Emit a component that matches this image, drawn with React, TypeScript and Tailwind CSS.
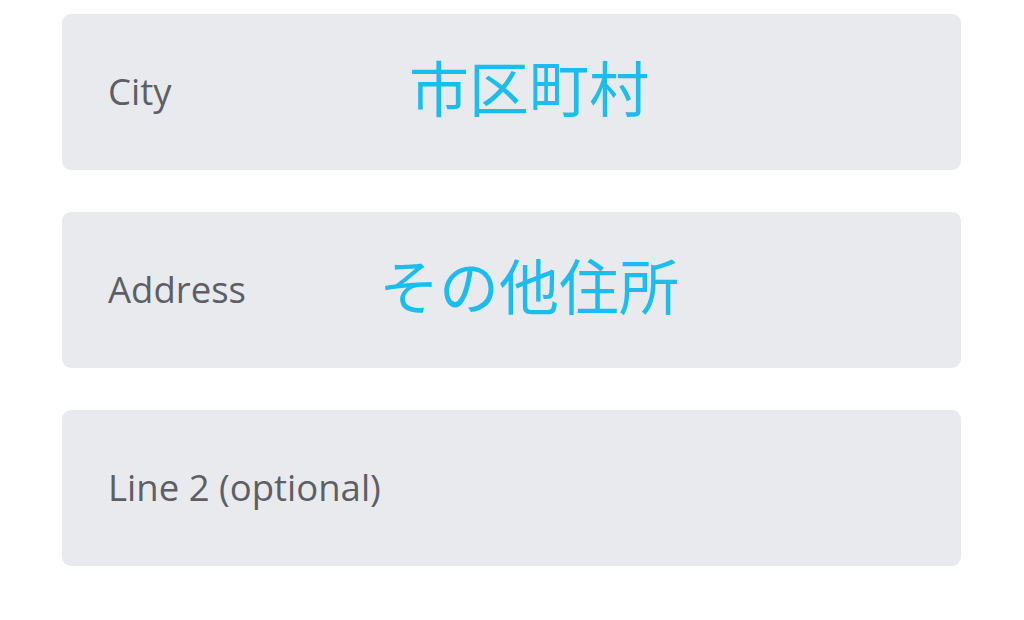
import React from "react";

const rows = [
  { label: "City", value: "市区町村" },
  { label: "Address", value: "その他住所" },
  { label: "Line 2 (optional)", value: "" },
];

export default function App() {
  return (
    <div className="w-[1024px] h-[620px] bg-white pt-[14px] pl-[62px] flex flex-col gap-[42px]">
      {rows.map((r) => (
        <div
          key={r.label}
          className="w-[899px] h-[156px] rounded-[9px] bg-[#e9eaee] pl-[46px] grid grid-cols-[241px_360px] items-center"
        >
          <span
            className="text-[36.5px] leading-none text-[#5d5e66] whitespace-nowrap -mt-[2px]"
            style={{ fontFamily: '"Open Sans", sans-serif' }}
          >
            {r.label}
          </span>
          <span
            className="text-center text-[60px] leading-none text-[#1bbdf0] whitespace-nowrap -mt-[12px]"
            style={{ fontFamily: '"Noto Sans CJK JP", sans-serif' }}
          >
            {r.value}
          </span>
        </div>
      ))}
    </div>
  );
}
